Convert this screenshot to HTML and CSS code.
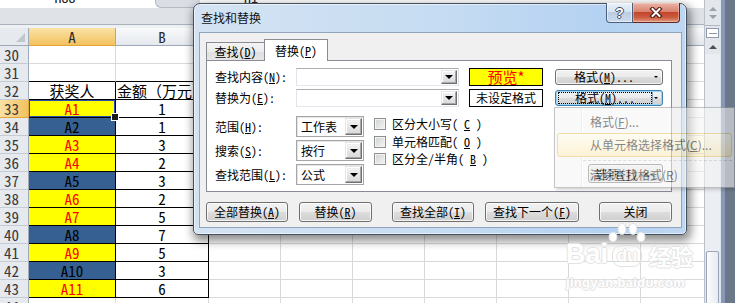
FILE: index.html
```html
<!DOCTYPE html>
<html lang="zh-CN">
<head>
<meta charset="utf-8">
<title>查找和替换</title>
<link rel="stylesheet" href="styles.css">
</head>
<body>
<div class="screen">
  <div class="workbook">
    <div class="formula-bar">
      <div class="name-box"><span>H88</span></div>
      <div class="fx-zone"></div>
      <div class="formula-input"><span>H1</span></div>
    </div>
    <div class="ribbon-edge"></div>
    <div class="sheet-grid">
      <div class="corner"></div><div class="ch sel">A</div><div class="ch">B</div><div class="ch">C</div><div class="ch">D</div><div class="ch">E</div><div class="ch">F</div><div class="ch">G</div><div class="ch">H</div><div class="ch">I</div>

      <div class="rh">30</div><div class="c"></div><div class="c"></div><div class="c"></div><div class="c"></div><div class="c"></div><div class="c"></div><div class="c"></div><div class="c"></div><div class="c"></div>
      <div class="rh">31</div><div class="c tt"></div><div class="c tt"></div><div class="c"></div><div class="c"></div><div class="c"></div><div class="c"></div><div class="c"></div><div class="c"></div><div class="c"></div>
      <div class="rh">32</div><div class="c t">获奖人</div><div class="c t">金额（万元）</div><div class="c"></div><div class="c"></div><div class="c"></div><div class="c"></div><div class="c"></div><div class="c"></div><div class="c"></div>
      <div class="rh sel">33</div><div class="c t y cursor-cell">A1</div><div class="c t">1</div><div class="c"></div><div class="c"></div><div class="c"></div><div class="c"></div><div class="c"></div><div class="c"></div><div class="c"></div>
      <div class="rh">34</div><div class="c t b">A2</div><div class="c t">1</div><div class="c"></div><div class="c"></div><div class="c"></div><div class="c"></div><div class="c"></div><div class="c"></div><div class="c"></div>
      <div class="rh">35</div><div class="c t y">A3</div><div class="c t">3</div><div class="c"></div><div class="c"></div><div class="c"></div><div class="c"></div><div class="c"></div><div class="c"></div><div class="c"></div>
      <div class="rh">36</div><div class="c t y">A4</div><div class="c t">2</div><div class="c"></div><div class="c"></div><div class="c"></div><div class="c"></div><div class="c"></div><div class="c"></div><div class="c"></div>
      <div class="rh">37</div><div class="c t b">A5</div><div class="c t">3</div><div class="c"></div><div class="c"></div><div class="c"></div><div class="c"></div><div class="c"></div><div class="c"></div><div class="c"></div>
      <div class="rh">38</div><div class="c t y">A6</div><div class="c t">2</div><div class="c"></div><div class="c"></div><div class="c"></div><div class="c"></div><div class="c"></div><div class="c"></div><div class="c"></div>
      <div class="rh">39</div><div class="c t y">A7</div><div class="c t">5</div><div class="c"></div><div class="c"></div><div class="c"></div><div class="c"></div><div class="c"></div><div class="c"></div><div class="c"></div>
      <div class="rh">40</div><div class="c t b">A8</div><div class="c t">7</div><div class="c"></div><div class="c"></div><div class="c"></div><div class="c"></div><div class="c"></div><div class="c"></div><div class="c"></div>
      <div class="rh">41</div><div class="c t y">A9</div><div class="c t">5</div><div class="c"></div><div class="c"></div><div class="c"></div><div class="c"></div><div class="c"></div><div class="c"></div><div class="c"></div>
      <div class="rh">42</div><div class="c t b">A10</div><div class="c t">3</div><div class="c"></div><div class="c"></div><div class="c"></div><div class="c"></div><div class="c"></div><div class="c"></div><div class="c"></div>
      <div class="rh">43</div><div class="c t y">A11</div><div class="c t">6</div><div class="c"></div><div class="c"></div><div class="c"></div><div class="c"></div><div class="c"></div><div class="c"></div><div class="c"></div>
      <div class="rh">44</div><div class="c"></div><div class="c"></div><div class="c"></div><div class="c"></div><div class="c"></div><div class="c"></div><div class="c"></div><div class="c"></div><div class="c"></div>
    </div>
  </div>

  <div class="vscroll">
    <div class="vs-expand"><i class="tri-up small"></i><i class="tri-down small"></i></div>
    <div class="vs-split"></div>
    <div class="vs-arrow"><i class="tri-up"></i></div>
    <div class="vs-track"></div>
    <div class="vs-thumb"></div>
  </div>
  <div class="window-edge"></div>

  <div class="dialog">
    <div class="titlebar">
      <span class="title">查找和替换</span>
      <div class="caption-buttons">
        <div class="cap-help">?</div>
        <div class="cap-close">
          <svg width="14" height="11" viewBox="0 0 14 11">
            <path d="M3.5 2 L10.5 9 M10.5 2 L3.5 9" stroke="#4a1b12" stroke-width="4.2" stroke-linecap="square" fill="none"/>
            <path d="M3.5 2 L10.5 9 M10.5 2 L3.5 9" stroke="#ffffff" stroke-width="2" stroke-linecap="square" fill="none"/>
          </svg>
        </div>
      </div>
    </div>

    <div class="client">
      <div class="tabs">
        <div class="tab">查找(<u>D</u>)</div>
        <div class="tab current">替换(<u>P</u>)</div>
      </div>

      <div class="panel">
        <div class="find-grid">
          <label class="lbl">查找内容(<u>N</u>):</label>
          <div class="combo"><span class="drop"><i class="tri-down"></i></span></div>
          <div class="preview">预览*</div>
          <div class="btn split">格式(<u>M</u>)...<span class="split-arrow"></span></div>

          <label class="lbl">替换为(<u>E</u>):</label>
          <div class="combo"><span class="drop"><i class="tri-down"></i></span></div>
          <div class="preview plain">未设定格式</div>
          <div class="btn split focus"><span class="focus-rect">格式(<u>M</u>)...</span><span class="split-arrow"></span></div>
        </div>

        <div class="options-area">
          <div class="scope-grid">
            <label class="lbl">范围(<u>H</u>):</label>
            <div class="select"><span>工作表</span><span class="drop"><i class="tri-down"></i></span></div>
            <label class="lbl">搜索(<u>S</u>):</label>
            <div class="select"><span>按行</span><span class="drop"><i class="tri-down"></i></span></div>
            <label class="lbl">查找范围(<u>L</u>):</label>
            <div class="select"><span>公式</span><span class="drop"><i class="tri-down"></i></span></div>
          </div>
          <div class="checks">
            <div class="check-row"><span class="check"></span>区分大小写(<u>C</u>)</div>
            <div class="check-row"><span class="check"></span>单元格匹配(<u>O</u>)</div>
            <div class="check-row"><span class="check"></span>区分全/半角(<u>B</u>)</div>
          </div>
          <div class="btn options-btn">选项(<u>T</u>) &lt;&lt;</div>
        </div>
      </div>

      <div class="actions">
        <div class="btn w82">全部替换(<u>A</u>)</div>
        <div class="btn w73 gap11">替换(<u>R</u>)</div>
        <div class="btn w82 gap20">查找全部(<u>I</u>)</div>
        <div class="btn w94 gap11">查找下一个(<u>F</u>)</div>
        <div class="btn w73 gap20">关闭</div>
      </div>
    </div>
  </div>

  <div class="popup-menu">
    <div class="menu-item">格式(<u>F</u>)...</div>
    <div class="menu-item hot">从单元格选择格式(<u>C</u>)...</div>
    <div class="menu-sep"></div>
    <div class="menu-item">清除查找格式(<u>R</u>)</div>
  </div>

  <div class="watermark">
    <div class="wm-logo">
      <span class="wm-word">Bai</span>
      <span class="wm-paw">
        <svg class="wm-toes" width="38" height="22" viewBox="0 0 38 22">
          <ellipse cx="5" cy="14" rx="4" ry="5"/>
          <ellipse cx="14" cy="6" rx="4" ry="5.5"/>
          <ellipse cx="25" cy="6" rx="4" ry="5.5"/>
          <ellipse cx="33" cy="14" rx="4" ry="5"/>
        </svg>
        <span class="wm-du">du</span>
      </span>
      <span class="wm-word cjk">经验</span>
    </div>
    <div class="wm-url">jingyan.baidu.com</div>
  </div>
</div>
</body>
</html>
```

FILE: styles.css
```css
* { box-sizing: border-box; }

html, body {
  margin: 0;
  padding: 0;
}

body {
  width: 735px;
  height: 303px;
  overflow: hidden;
  background: #fff;
  font-family: "Noto Sans CJK SC", sans-serif;
}

u { text-decoration: underline; text-underline-offset: 1px; }

.screen {
  position: relative;
  display: flex;
  width: 735px;
  height: 303px;
  overflow: hidden;
}

/* ---------- workbook ---------- */
.workbook {
  width: 704px;
  flex: none;
  display: flex;
  flex-direction: column;
  overflow: hidden;
}

.formula-bar {
  height: 8px;
  flex: none;
  display: flex;
  background: #fff;
  overflow: hidden;
  font: 14px/14px "Noto Sans Mono CJK SC", "Noto Sans CJK SC", monospace;
  color: #222;
}
.name-box { width: 130px; text-align: center; }
.name-box span, .formula-input span { display: block; margin-top: -10px; }
.fx-zone {
  width: 45px;
  margin-left: 25px;
  background: #dadee4;
  border-left: 1px solid #b4bbc5;
  border-bottom: 1px solid #b4bbc5;
  border-radius: 0 0 0 6px;
}
.formula-input { flex: 1; padding-left: 44px; }

.ribbon-edge {
  height: 20px;
  flex: none;
  background: linear-gradient(#dfe3e8 0 16px, #a9b1bc 16px 17px, #eef1f4 17px);
}

.sheet-grid {
  display: grid;
  grid-template-columns: 29px 87px 93px repeat(7, 72px);
  grid-auto-rows: 18px;
  font: 15px/17px "Noto Sans Mono CJK SC", "Noto Sans CJK SC", monospace;
  color: #000;
}

.sheet-grid > div {
  border-right: 1px solid #d9d9d9;
  border-bottom: 1px solid #d9d9d9;
  text-align: center;
  white-space: nowrap;
}

.corner {
  position: relative;
  background: #e6e9ee;
  border-right-color: #9eaab9 !important;
  border-bottom-color: #9eaab9 !important;
}
.corner::after {
  content: "";
  position: absolute;
  right: 3px;
  bottom: 3px;
  border-style: solid;
  border-width: 0 0 9px 9px;
  border-color: transparent transparent #c2c7ce transparent;
}

.sheet-grid > .ch {
  background: linear-gradient(#f8f9fb, #e4e8ed);
  border-right-color: #c5cbd3;
  border-bottom-color: #9eaab9;
  color: #2b2b2b;
}
.sheet-grid > .ch.sel {
  background: linear-gradient(#fae2a6, #f2c25e);
  border-right-color: #e0a43a;
  border-bottom-color: #e0a43a;
}

.sheet-grid > .rh {
  background: #e6e9ee;
  border-right-color: #9eaab9;
  border-bottom-color: #c5cbd3;
  color: #3a3a3a;
  padding-right: 5px;
}
.sheet-grid > .rh.sel {
  background: linear-gradient(to right, #fae2a6, #f2c25e);
  border-right-color: #e0a43a;
  border-bottom-color: #e0a43a;
}

.sheet-grid > .t { border-right-color: #000; border-bottom-color: #000; }
.sheet-grid > .tt { border-bottom-color: #000; }
.y { background: #ffff00; color: #ff0000; }
.b { background: #366092; color: #000; }

/* active cell outline with its fill handle */
.cursor-cell {
  position: relative;
  box-shadow: inset 0 0 0 1px #2d4fb3;
}
.cursor-cell::after {
  content: "";
  position: absolute;
  z-index: 2;
  right: -4px;
  bottom: -4px;
  width: 6px;
  height: 6px;
  background: #1d1d1d;
  border: 1px solid #fff;
}

/* ---------- vertical scrollbar + window edge ---------- */
.vscroll {
  width: 16px;
  flex: none;
  display: flex;
  flex-direction: column;
  background: #e3e7ec;
  border-left: 1px solid #bac1cb;
}
.vs-expand {
  height: 26px;
  flex: none;
  border-bottom: 1px solid #b0b8c3;
  display: flex;
  flex-direction: column;
  align-items: center;
  justify-content: center;
  gap: 4px;
}
.vs-split {
  height: 10px;
  flex: none;
  margin: 2px 1px 1px;
  background: #fff;
  border: 1px solid #8f9bab;
  display: flex;
  align-items: center;
  justify-content: center;
}
.vs-split::after { content: ""; width: 8px; height: 1px; background: #8f9bab; }
.vs-arrow {
  height: 15px;
  flex: none;
  display: flex;
  align-items: center;
  justify-content: center;
}
.vs-track { flex: 1; background: #ebeef2; }
.vs-thumb {
  height: 55px;
  flex: none;
  margin: 0 1px -3px;
  border: 1px solid #9ba6b6;
  border-radius: 2px;
  background: linear-gradient(to right, #fbfcfd, #e6eaf0);
}

.tri-up, .tri-down {
  display: block;
  width: 0;
  height: 0;
  border-left: 4px solid transparent;
  border-right: 4px solid transparent;
}
.tri-up { border-bottom: 4px solid #4f4f4f; }
.tri-down { border-top: 4px solid #000; }
.tri-up.small { border-bottom-color: #98a1ae; }
.tri-down.small { border-top-color: #98a1ae; }

.window-edge {
  width: 15px;
  flex: none;
  background: linear-gradient(to right, #dde3ec 0 1px, #8799b6 1px 5px, #6c7789 5px);
}

/* ---------- dialog window ---------- */
.dialog {
  position: absolute;
  left: 193px;
  top: 3px;
  width: 494px;
  height: 232px;
  display: flex;
  flex-direction: column;
  padding: 0 4px 6px 5px;
  border: 1px solid #46505e;
  border-radius: 7px 7px 5px 5px;
  background: linear-gradient(to right, #d4e3f3 0%, #c6dcf2 50%, #b3d1f2 85%, #bfd7f1 100%);
  box-shadow: inset 0 0 0 1px rgba(255, 255, 255, 0.55), 2px 4px 10px 2px rgba(0, 0, 0, 0.45);
  font: 12px/14px "Noto Sans Mono CJK SC", "Noto Sans CJK SC", sans-serif;
  color: #000;
  z-index: 5;
}

.titlebar {
  height: 28px;
  flex: none;
  display: flex;
  justify-content: space-between;
  align-items: flex-start;
}
.title {
  align-self: center;
  padding-left: 2px;
  font: 12px/14px "Noto Sans CJK SC", sans-serif;
  color: #111;
}
.caption-buttons {
  display: flex;
  margin-top: -1px;
  margin-right: 2px;
}
.cap-help {
  width: 27px;
  height: 20px;
  border: 1px solid #4d607b;
  border-top: none;
  border-radius: 0 0 0 4px;
  background: linear-gradient(#eaf1f9, #d6e3f1 45%, #bccde2 50%, #cbdcef);
  box-shadow: inset 0 0 0 1px rgba(255, 255, 255, 0.5);
  display: flex;
  align-items: center;
  justify-content: center;
  font: bold 14px/14px "Liberation Sans", sans-serif;
  color: #fff;
  text-shadow: 1px 0 #3c4c63, -1px 0 #3c4c63, 0 1px #3c4c63, 0 -1px #3c4c63;
}
.cap-close {
  width: 47px;
  height: 20px;
  border: 1px solid #5e271b;
  border-top: none;
  border-left: none;
  border-radius: 0 0 4px 0;
  background: linear-gradient(#ebb3a5, #da8470 45%, #c4452b 50%, #cb5b40 75%, #e39a7f);
  box-shadow: inset 0 0 0 1px rgba(255, 220, 210, 0.45);
  display: flex;
  align-items: center;
  justify-content: center;
}

.client {
  flex: 1;
  display: flex;
  flex-direction: column;
  background: #f0f0f0;
  border: 1px solid #93a5bc;
  padding: 6px 9px 5px 6px;
}

.tabs {
  height: 22px;
  flex: none;
  margin-bottom: -1px;
  display: flex;
  align-items: flex-end;
}
.tab {
  width: 59px;
  height: 18px;
  margin-bottom: 1px;
  border: 1px solid #898c95;
  border-bottom: none;
  background: linear-gradient(#f4f4f4, #ececec 50%, #dfdfdf 50%, #e6e6e6);
  display: flex;
  align-items: center;
  justify-content: center;
}
.tab.current {
  position: relative;
  z-index: 1;
  width: 64px;
  height: 22px;
  margin-left: -1px;
  margin-bottom: 0;
  background: #fff;
}

.panel {
  height: 132px;
  flex: none;
  background: #fff;
  border: 1px solid #898c95;
}

.lbl { display: flex; align-items: center; white-space: nowrap; }

.find-grid {
  display: grid;
  grid-template-columns: 81px 173px 86px 108px;
  grid-template-rows: 18px 18px;
  row-gap: 3px;
  padding: 7px 0 0 8px;
}

.combo {
  width: 163px;
  height: 18px;
  padding: 1px;
  display: flex;
  justify-content: flex-end;
  background: #fff;
  border: 1px solid;
  border-color: #abadb3 #dbdfe6 #e3e9ef #e2e3ea;
}

.drop {
  width: 16px;
  height: 100%;
  display: flex;
  align-items: center;
  justify-content: center;
  background: linear-gradient(#f3f3f3, #dadada);
  border: 1px solid;
  border-color: #e6e6e6 #6f6f6f #6f6f6f #e6e6e6;
  box-shadow: inset -1px -1px #a8a8a8, inset 1px 1px #fff;
}

.preview {
  width: 74px;
  height: 18px;
  border: 1px solid #000;
  background: #ffff00;
  color: #ff0000;
  font: 15px/16px "Noto Sans CJK SC", sans-serif;
  display: flex;
  align-items: center;
  justify-content: center;
}
.preview.plain {
  background: #fff;
  color: #000;
  font: 12px/14px "Noto Sans CJK SC", sans-serif;
}

.btn {
  display: flex;
  align-items: center;
  justify-content: center;
  border: 1px solid #707070;
  border-radius: 3px;
  background: linear-gradient(#f2f2f2, #ebebeb 50%, #dddddd 50%, #cfcfcf);
  box-shadow: inset 0 0 0 1px rgba(255, 255, 255, 0.75);
  white-space: nowrap;
  color: #000;
}

.split {
  position: relative;
  width: 108px;
  height: 16px;
  align-self: center;
  padding-right: 10px;
}
.split-arrow {
  position: absolute;
  right: 4px;
  top: 6px;
  border-left: 2px solid transparent;
  border-right: 2px solid transparent;
  border-top: 2px solid #000;
}
.split.focus {
  border-color: #3c7fb1;
  box-shadow: inset 0 0 0 1px #9fd5f4;
  padding: 1px 10px 1px 2px;
  justify-content: stretch;
}
.split.focus::before {
  content: "";
  position: absolute;
  right: 9px;
  top: 1px;
  bottom: 1px;
  width: 1px;
  background: #8aa7bf;
}
.focus-rect {
  flex: 1;
  height: 100%;
  border: 1px dotted #000;
  display: flex;
  align-items: center;
  justify-content: center;
}

.options-area {
  display: flex;
  margin-top: 9px;
  padding-left: 8px;
}
.scope-grid {
  display: grid;
  grid-template-columns: 81px 68px;
  grid-auto-rows: 21px;
  row-gap: 3px;
}
.select {
  height: 21px;
  display: flex;
  align-items: center;
  justify-content: space-between;
  padding: 2px 1px 2px 4px;
  background: #fff;
  border: 1px solid #a6a6a6;
  box-shadow: inset 1px 1px #e4e4e4;
}
.select .drop { height: 17px; width: 17px; }

.checks {
  margin-left: 10px;
  padding-top: 2px;
  display: flex;
  flex-direction: column;
}
.check-row {
  height: 17.5px;
  display: flex;
  align-items: flex-start;
  gap: 6px;
  line-height: 12px;
  white-space: nowrap;
}
.check {
  width: 12px;
  height: 12px;
  flex: none;
  border: 1px solid #8e8f8f;
  background: linear-gradient(135deg, #cfd1d4, #f5f5f5);
  box-shadow: inset 0 0 0 1px #f4f4f4;
}

.options-btn {
  width: 75px;
  height: 19px;
  margin: 48px 8px 0 auto;
}

.actions {
  display: flex;
  height: 20px;
  flex: none;
  margin-top: 10px;
}
.actions .btn { height: 20px; }
.w82 { width: 82px; }
.w73 { width: 73px; }
.w94 { width: 94px; }
.gap11 { margin-left: 11px; }
.gap20 { margin-left: 20px; }

/* ---------- drop-down menu (fading in) ---------- */
.popup-menu {
  position: absolute;
  left: 554px;
  top: 107px;
  width: 181px;
  height: 81px;
  padding: 2px 2px 1px;
  border: 1px solid #979797;
  background:
    linear-gradient(to right, transparent 26px, #e2e3e3 26px 27px, #fff 27px 28px, transparent 28px),
    #f5f5f5;
  box-shadow: 2px 2px 3px rgba(0, 0, 0, 0.3);
  opacity: 0.55;
  z-index: 10;
  font: 12px/14px "Noto Sans CJK SC", sans-serif;
  color: #222;
}
.menu-item {
  height: 23px;
  display: flex;
  align-items: center;
  padding-left: 32px;
  border: 1px solid transparent;
  border-radius: 3px;
  white-space: nowrap;
}
.menu-item.hot {
  height: 24px;
  border-color: #e5c365;
  background: linear-gradient(#fefaea, #fbe9b3);
}
.menu-sep {
  height: 3px;
  margin: 3px 0 0 26px;
  border-top: 1px dashed #c3c3c3;
}

/* ---------- site watermark ---------- */
.watermark {
  position: absolute;
  left: 566px;
  top: 224px;
  z-index: 20;
  display: flex;
  flex-direction: column;
  color: #fff;
  text-shadow: 1px 0 #e3e3e3, -1px 0 #e3e3e3, 0 1px #e3e3e3, 0 -1px #e3e3e3;
}
.wm-logo { display: flex; align-items: flex-end; height: 44px; }
.wm-word { font: bold 27px/27px "Liberation Sans", sans-serif; }
.wm-word.cjk { font: bold 22px/26px "Noto Sans CJK SC", sans-serif; margin-left: 3px; }
.wm-paw {
  display: flex;
  flex-direction: column;
  align-items: center;
  width: 38px;
}
.wm-toes { display: block; fill: #fff; stroke: #dedede; stroke-width: 1; }
.wm-du {
  font: bold 17px/20px "Liberation Sans", sans-serif;
  padding: 0 4px;
  border: 1px solid #e3e3e3;
  border-radius: 9px;
  margin-bottom: 1px;
}
.wm-url {
  font: bold 13px/14px "Liberation Sans", sans-serif;
  margin-top: 8px;
  letter-spacing: 0.3px;
}
```
